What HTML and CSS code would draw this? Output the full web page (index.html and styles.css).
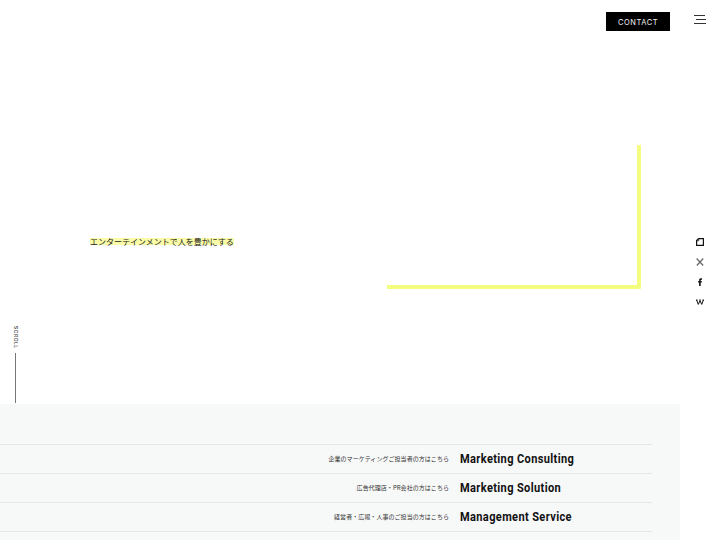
FILE: index.html
```html
<!DOCTYPE html>
<html lang="ja">
<head>
<meta charset="utf-8">
<title>Entertainment</title>
<link rel="stylesheet" href="styles.css">
</head>
<body>
<div class="page">
  <header class="header">
    <a class="contact">CONTACT</a>
    <div class="menu"><span class="m1"></span><span class="m2"></span><span class="m3"></span></div>
  </header>
  <main class="hero">
    <p class="tagline"><span class="mark">エンターテインメントで人を豊かにする</span></p>
    <div class="frame"></div>
  </main>
  <section class="services">
    <div class="row"><span class="label">企業のマーケティングご担当者の方はこちら</span><span class="title">Marketing Consulting</span></div>
    <div class="row"><span class="label">広告代理店・PR会社の方はこちら</span><span class="title">Marketing Solution</span></div>
    <div class="row"><span class="label">経営者・広報・人事のご担当の方はこちら</span><span class="title">Management Service</span></div>
  </section>
  <div class="scroll"><span class="scroll-text">SCROLL</span><span class="scroll-line"></span></div>
  <nav class="social">
    <svg class="ico" viewBox="0 0 8 8"><path d="M2.6.6H7.4V7.4H.6V2.6Z" fill="none" stroke="#111" stroke-width="1.2"/><path d="M.6 2.8H2.8V.6" fill="none" stroke="#111" stroke-width=".7"/></svg>
    <svg class="ico" viewBox="0 0 8 8"><path d="M.6.5 7.2 7.5M7.2.5.8 7.5" stroke="#666" stroke-width="1.2" fill="none"/></svg>
    <svg class="ico" viewBox="0 0 8 8"><path d="M3.1 8V4.6H2V3.2H3.1V2.2C3.1 1 3.8.3 4.9.3H6V1.7H5.2C4.8 1.7 4.7 1.9 4.7 2.3V3.2H6L5.8 4.6H4.7V8Z" fill="#111"/></svg>
    <svg class="ico" viewBox="0 0 8 8"><path d="M.6 2 2.3 6.4 4 2.7 5.7 6.4 7.4 2M0 2H1.5M3.2 2H4.8M6.5 2H8" stroke="#111" stroke-width="1" fill="none"/></svg>
  </nav>
</div>
</body>
</html>
```
FILE: styles.css
```css
* { box-sizing: border-box; }
html, body { margin: 0; padding: 0; background: #fff; }
.page { position: relative; width: 720px; height: 540px; overflow: hidden; font-family: "Noto Sans CJK JP", "Noto Sans", sans-serif; color: #111; }
.header { display: flex; justify-content: flex-end; align-items: flex-start; height: 43px; padding: 12px 14px 0 0; }
.contact { display: flex; align-items: center; justify-content: center; width: 64px; height: 19px; padding-top: 2px; background: #000; color: #f2f2f2; font: 400 7.5px "Inter", sans-serif; letter-spacing: .55px; }
.menu { display: flex; flex-direction: column; align-items: flex-end; gap: 3px; margin: 3px 0 0 24px; width: 12px; }
.menu span { display: block; height: 1px; background: #333; }
.m1 { width: 11px; margin-right: 1px; } .m2 { width: 10px; } .m3 { width: 12px; }
.hero { display: flex; justify-content: space-between; align-items: flex-start; height: 361px; padding: 102px 79px 0 90px; }
.tagline { margin: 90px 0 0; font-size: 8px; line-height: 14px; font-weight: 400; color: #222; }
.mark { background: linear-gradient(transparent 15%, #fafca8 15%, #fafca8 85%, transparent 85%); }
.frame { width: 254px; height: 144px; border-right: 4px solid #f4fe7e; border-bottom: 4px solid #f4fe7e; }
.services { width: 680px; height: 136px; background: #f7f8f8; padding: 40px 28px 0 0; }
.row { display: flex; align-items: center; height: 29px; border-top: 1px solid #e6e7e8; }
.row:last-child { border-bottom: 1px solid #e6e7e8; height: 30px; }
.label { width: 449px; padding-bottom: 2px; text-align: right; font-size: 6px; letter-spacing: .05px; font-weight: 400; color: #333; }
.title { margin-left: 11px; font: 700 12px "Roboto", sans-serif; letter-spacing: .4px; color: #111; transform: scaleX(.92); transform-origin: left center; white-space: nowrap; }
.scroll { position: absolute; left: 12px; top: 326px; display: flex; flex-direction: column; align-items: center; width: 7px; gap: 6px; }
.scroll-text { writing-mode: vertical-rl; font: 500 5px "Inter", sans-serif; letter-spacing: .5px; line-height: 7px; color: #333; height: 21px; }
.scroll-line { display: block; width: 1px; height: 50px; background: #777; }
.social { position: absolute; left: 696px; top: 238px; display: flex; flex-direction: column; gap: 12px; }
.ico { display: block; width: 8px; height: 8px; }
```
